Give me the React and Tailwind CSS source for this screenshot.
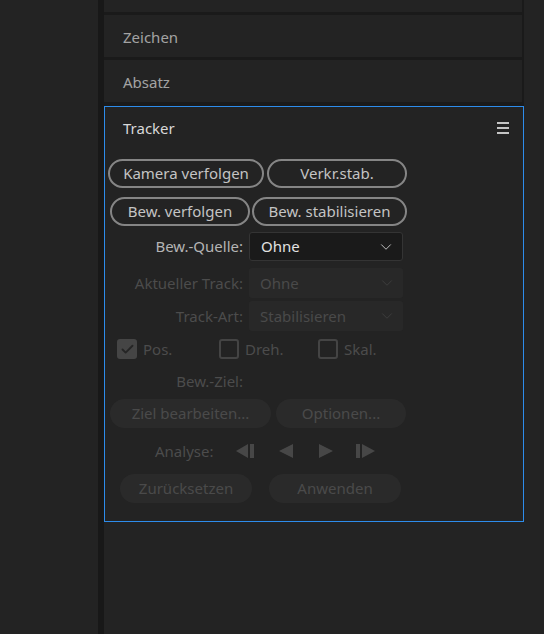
import { Check, ChevronDown } from "lucide-react";

const font = { fontFamily: '"Noto Sans", "Open Sans", sans-serif' };

function PillButton({ children, className = "", disabled = false }) {
  return (
    <button
      className={
        "h-[29px] shrink-0 rounded-full text-[15px] leading-none flex items-center justify-center " +
        (disabled
          ? "bg-[#2a2a2a] text-[#4a4a4a]"
          : "border-2 border-[#858585] text-[#c4c4c4]") +
        " " +
        className
      }
    >
      {children}
    </button>
  );
}

function Select({ value, disabled = false, className = "" }) {
  return (
    <div
      className={
        "w-[154px] rounded-[3px] flex items-center justify-between pl-[11px] pr-[7px] text-[15px] " +
        (disabled
          ? "bg-[#282828] text-[#4a4a4a]"
          : "bg-[#1a1a1a] border border-[#343434] text-[#e2e2e2]") +
        " " +
        className
      }
    >
      <span>{value}</span>
      <ChevronDown
        size={18}
        strokeWidth={1.2}
        className={disabled ? "text-[#3e3e3e]" : "text-[#cfcfcf]"}
      />
    </div>
  );
}

function FieldRow({ label, disabled, children, className = "" }) {
  return (
    <div className={"flex items-center " + className}>
      <div
        className={
          "w-[144px] text-right pr-[6px] text-[15px] " +
          (disabled ? "text-[#4c4c4c]" : "text-[#b4b4b4]")
        }
      >
        {label}
      </div>
      {children}
    </div>
  );
}

function Checkbox({ checked }) {
  return (
    <div
      className={
        "w-[20px] h-[20px] rounded-[3px] flex items-center justify-center " +
        (checked ? "bg-[#454545]" : "border-2 border-[#444444]")
      }
    >
      {checked && <Check size={15} strokeWidth={3} className="text-[#252525]" />}
    </div>
  );
}

// transport controls for the analysis row
function StepBack() {
  return (
    <svg width="20" height="14" viewBox="0 0 20 14">
      <polygon points="0,7 12,0 12,14" fill="#474747" />
      <rect x="14" y="0" width="4" height="14" fill="#474747" />
    </svg>
  );
}
function Back() {
  return (
    <svg width="14" height="14" viewBox="0 0 14 14">
      <polygon points="0,7 14,0 14,14" fill="#474747" />
    </svg>
  );
}
function Play() {
  return (
    <svg width="14" height="14" viewBox="0 0 14 14">
      <polygon points="14,7 0,0 0,14" fill="#474747" />
    </svg>
  );
}
function StepForward() {
  return (
    <svg width="20" height="14" viewBox="0 0 20 14">
      <rect x="0" y="0" width="4" height="14" fill="#474747" />
      <polygon points="19,7 6,0 6,14" fill="#474747" />
    </svg>
  );
}

function CollapsedPanel({ title, className = "" }) {
  return (
    <div
      className={
        "bg-[#232323] border-r-2 border-[#1a1a1a] flex items-center pl-[19px] pt-[3px] text-[15px] text-[#a3a3a3] " +
        className
      }
    >
      {title}
    </div>
  );
}

export default function App() {
  return (
    <div className="w-[544px] h-[634px] flex bg-[#232323] overflow-hidden" style={font}>
      <div className="w-[98px] bg-[#232323]" />
      <div className="w-[6px] bg-[#181818]" />
      <div className="w-[420px] flex flex-col">
        {/* stacked panels above the tracker */}
        <div className="bg-[#1a1a1a] flex flex-col gap-[3px] pb-[4px]">
          <div className="h-[12px] bg-[#232323] border-r-2 border-[#1a1a1a]" />
          <CollapsedPanel title="Zeichen" className="h-[42px]" />
          <CollapsedPanel title="Absatz" className="h-[42px]" />
        </div>

        {/* Tracker */}
        <div className="h-[416px] border border-[#2d8ceb] bg-[#232323] flex flex-col">
          <div className="h-[42px] flex items-center justify-between pl-[18px] pr-[14px]">
            <span className="text-[15px] text-[#d8d8d8]">Tracker</span>
            <div className="flex flex-col gap-[3px] w-[12px]">
              <div className="h-[2px] bg-[#c4c4c4]" />
              <div className="h-[2px] bg-[#c4c4c4]" />
              <div className="h-[2px] bg-[#c4c4c4]" />
            </div>
          </div>

          <div className="flex gap-[3px] mt-[10px] pl-[3px]">
            <PillButton className="w-[156px]">Kamera verfolgen</PillButton>
            <PillButton className="w-[140px]">Verkr.stab.</PillButton>
          </div>
          <div className="flex gap-[2px] mt-[9px] pl-[5px]">
            <PillButton className="w-[140px]">Bew. verfolgen</PillButton>
            <PillButton className="w-[155px]">Bew. stabilisieren</PillButton>
          </div>

          <FieldRow label="Bew.-Quelle:" className="mt-[6px]">
            <Select value="Ohne" className="h-[29px]" />
          </FieldRow>
          <FieldRow label="Aktueller Track:" disabled className="mt-[7px]">
            <Select value="Ohne" disabled className="h-[30px]" />
          </FieldRow>
          <FieldRow label="Track-Art:" disabled className="mt-[3px]">
            <Select value="Stabilisieren" disabled className="h-[30px]" />
          </FieldRow>

          <div className="flex items-center mt-[8px] h-[20px] pl-[12px] text-[15px] text-[#4c4c4c]">
            <div className="flex items-center gap-[6px] w-[102px]">
              <Checkbox checked />
              <span>Pos.</span>
            </div>
            <div className="flex items-center gap-[6px] w-[99px]">
              <Checkbox />
              <span>Dreh.</span>
            </div>
            <div className="flex items-center gap-[6px]">
              <Checkbox />
              <span>Skal.</span>
            </div>
          </div>

          <FieldRow label="Bew.-Ziel:" disabled className="mt-[12px] h-[20px]" />

          <div className="flex gap-[5px] mt-[8px] pl-[5px]">
            <PillButton disabled className="w-[161px]">Ziel bearbeiten...</PillButton>
            <PillButton disabled className="w-[130px]">Optionen...</PillButton>
          </div>

          <div className="flex items-center mt-[13px] h-[20px] text-[15px] text-[#4c4c4c]">
            <span className="pl-[50px] w-[131px]">Analyse:</span>
            <div className="flex items-center">
              <StepBack />
              <div className="w-[23px]" />
              <Back />
              <div className="w-[26px]" />
              <Play />
              <div className="w-[23px]" />
              <StepForward />
            </div>
          </div>

          <div className="flex gap-[17px] mt-[13px] pl-[15px]">
            <PillButton disabled className="w-[132px]">Zurücksetzen</PillButton>
            <PillButton disabled className="w-[132px]">Anwenden</PillButton>
          </div>
        </div>
      </div>
      <div className="flex-1 bg-[#232323]" />
    </div>
  );
}
